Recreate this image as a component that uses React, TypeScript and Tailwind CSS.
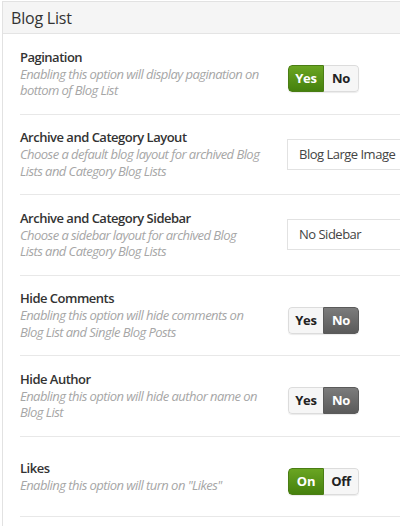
import React from 'react';

type Row = {
    title: string;
    desc: string[];
    kind: 'toggle' | 'select';
    labels?: [string, string];
    active?: 0 | 1;
    value?: string;
};

const rows: Row[] = [
    { title: 'Pagination', desc: ['Enabling this option will display pagination on', 'bottom of Blog List'], kind: 'toggle', labels: ['Yes', 'No'], active: 0 },
    { title: 'Archive and Category Layout', desc: ['Choose a default blog layout for archived Blog', 'Lists and Category Blog Lists'], kind: 'select', value: 'Blog Large Image' },
    { title: 'Archive and Category Sidebar', desc: ['Choose a sidebar layout for archived Blog', 'Lists and Category Blog Lists'], kind: 'select', value: 'No Sidebar' },
    { title: 'Hide Comments', desc: ['Enabling this option will hide comments on', 'Blog List and Single Blog Posts'], kind: 'toggle', labels: ['Yes', 'No'], active: 1 },
    { title: 'Hide Author', desc: ['Enabling this option will hide author name on', 'Blog List'], kind: 'toggle', labels: ['Yes', 'No'], active: 1 },
    { title: 'Likes', desc: ['Enabling this option will turn on "Likes"'], kind: 'toggle', labels: ['On', 'Off'], active: 0 },
];

const Toggle: React.FC<{ labels: [string, string]; active: 0 | 1 }> = ({ labels, active }) => {
    const onClass = active === 0
        ? 'bg-gradient-to-b from-[#6aa522] to-[#45810d] text-white border-[#4a7d14]'
        : 'bg-gradient-to-b from-[#7c7c7c] to-[#5a5a5a] text-white border-[#5a5a5a]';
    const offClass = 'bg-[#f6f6f6] text-[#222] border-[#dcdcdc]';
    return (
        <div className="mt-[10px] flex h-[27px] w-[71px] rounded-[4px] overflow-hidden text-[13px] font-bold tracking-[-0.3px] shadow-[0_1px_1px_rgba(0,0,0,0.08)]">
            <span className={`flex-1 flex items-center justify-center border rounded-l-[4px] ${active === 0 ? onClass : offClass + ' border-r-0'}`}>{labels[0]}</span>
            <span className={`flex-1 flex items-center justify-center border rounded-r-[4px] ${active === 1 ? onClass : offClass + ' border-l-0'}`}>{labels[1]}</span>
        </div>
    );
};

export default function App() {
    return (
        <div className="w-[400px] h-[526px] bg-white overflow-hidden pt-[1px] pl-[2px]" style={{ fontFamily: '"Open Sans", "Noto Sans", sans-serif' }}>
            <div className="border-l border-t border-[#e2e2e2] h-full">
                <div className="h-[32px] bg-[#f5f5f5] border-b border-[#e4e4e4] flex items-center pl-[8px] text-[16px] text-[#333] tracking-[-0.2px]">
                    Blog List
                </div>
                <div className="pl-[17px]">
                    {rows.map((r) => (
                        <div key={r.title} className="h-[80.5px] border-b border-[#e8e8e8] flex items-center">
                            <div className="w-[268px] shrink-0">
                                <div className="text-[13px] leading-[17px] font-semibold text-[#333] tracking-[-0.5px]">{r.title}</div>
                                {r.desc.map((line) => (
                                    <div key={line} className="whitespace-nowrap text-[13px] leading-[16.5px] italic text-[#a6a6a6] tracking-[-0.55px]">{line}</div>
                                ))}
                            </div>
                            {r.kind === 'toggle' ? (
                                <Toggle labels={r.labels!} active={r.active!} />
                            ) : (
                                <div className="h-[31px] flex-1 border border-r-0 border-[#e2e2e2] flex items-center pl-[11px] text-[13px] text-[#444] tracking-[-0.5px] -ml-[1px] whitespace-nowrap">
                                    {r.value}
                                </div>
                            )}
                        </div>
                    ))}
                </div>
            </div>
        </div>
    );
}
